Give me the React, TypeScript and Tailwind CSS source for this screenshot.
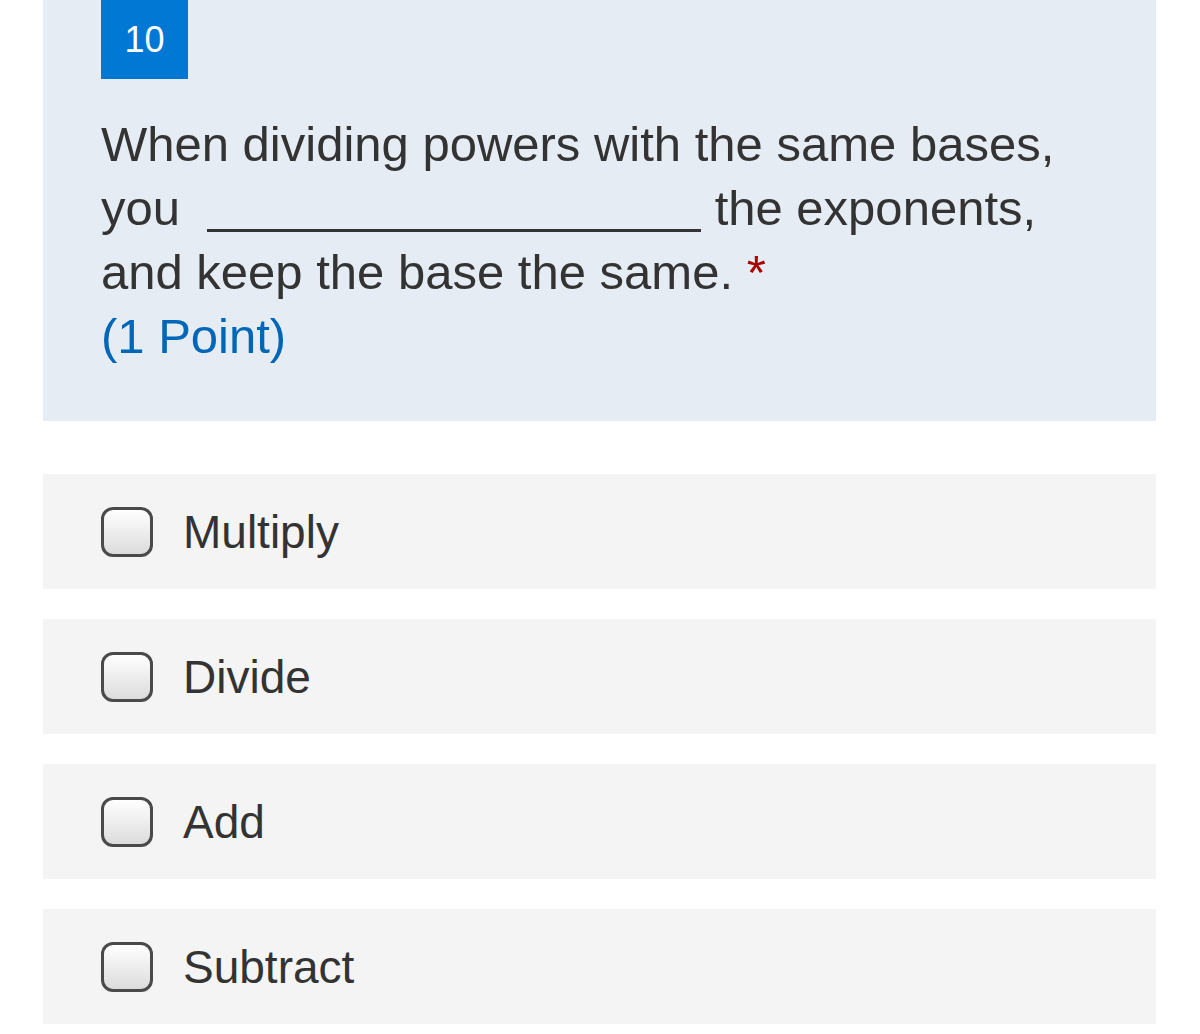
const options = ["Multiply", "Divide", "Add", "Subtract"];

const Checkbox = () => {
    return (
        <span className="inline-block w-[52px] h-[50px] shrink-0 rounded-[12px] border-[3px] border-[#4a4a4a] bg-gradient-to-b from-white to-[#dcdcdc]" />
    );
}

const App = () => {
    return (
        <div className="w-[1200px] h-[1034px] bg-white overflow-hidden text-[#333333]"
            style={{ fontFamily: '"Liberation Sans", Arial, Helvetica, sans-serif' }}>
            <div className="mx-[43px] w-[1113px] bg-[#e6ecf4] pl-[58px] pb-[53px]">
                <div className="w-[87px] h-[79px] bg-[#0078d4] text-white text-[36px] flex items-center justify-center">
                    10
                </div>
                <div className="mt-[33px] text-[49px] leading-[64px]">
                    When dividing powers with the same bases,
                    <br />
                    you
                    <span className="inline-block w-[494px] h-0 border-b-[3px] border-[#333333] ml-[27px] align-[-7px]" />
                    {" "}the exponents,
                    <br />
                    and keep the base the same. <span className="text-[#a80000]">*</span>
                    <br />
                    <span className="text-[#0067b8]">(1 Point)</span>
                </div>
            </div>
            <div className="mt-[53px] flex flex-col gap-[30px]">
                {options.map((option) => (
                    <div key={option}
                        className="mx-[43px] w-[1113px] h-[115px] bg-[#f4f4f4] flex items-center pl-[58px] gap-[30px]">
                        <Checkbox />
                        <span className="text-[46px] leading-none">{option}</span>
                    </div>
                ))}
            </div>
        </div>
    );
}

export default App;
